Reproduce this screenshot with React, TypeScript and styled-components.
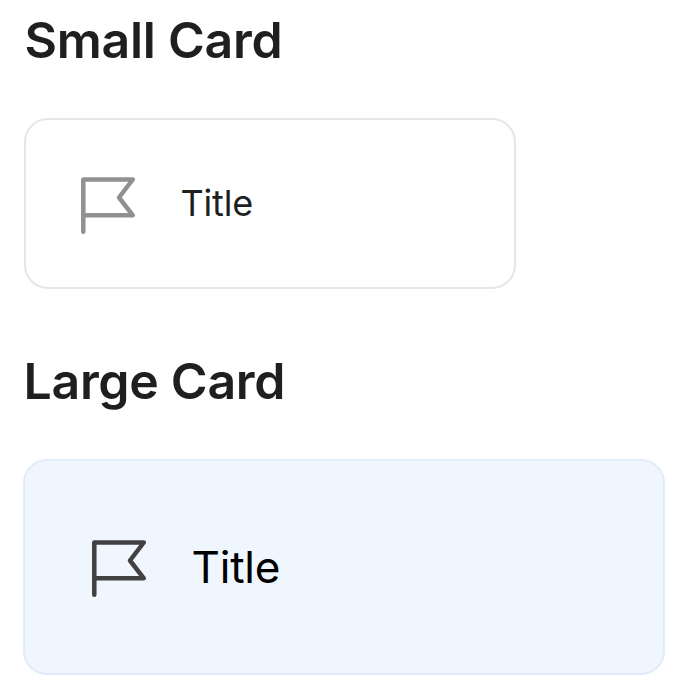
import React from "react";
import styled, { createGlobalStyle } from "styled-components";

const GlobalStyle = createGlobalStyle`
  * { box-sizing: border-box; }
  body { margin: 0; background: #fff; font-family: Inter, "Liberation Sans", sans-serif; }
`;

const Page = styled.main`
  display: flex;
  flex-direction: column;
  align-items: flex-start;
  padding: 10px 0 0 23px;
`;

const Heading = styled.h2<{ $tracking: number; $indent: number }>`
  margin: 0 0 0 ${(p) => p.$indent}px;
  height: 60px;
  line-height: 60px;
  font-size: 50px;
  font-weight: 600;
  letter-spacing: ${(p) => p.$tracking}px;
  color: #1f1f1f;
  white-space: nowrap;
`;

const Card = styled.section<{ $large?: boolean }>`
  display: flex;
  align-items: center;
  gap: 42.5px;
  width: ${(p) => (p.$large ? 642 : 492)}px;
  height: ${(p) => (p.$large ? 216 : 171)}px;
  margin: ${(p) => (p.$large ? "48px 0 0" : "48px 0 62px 1px")};
  padding-left: ${(p) => (p.$large ? 66 : 54)}px;
  border: 2px solid ${(p) => (p.$large ? "#e0ecf9" : "#e6e6e6")};
  border-radius: 24px;
  background: ${(p) => (p.$large ? "#eff6fd" : "#fff")};
`;

const Icon = styled.svg<{ $large?: boolean }>`
  display: block;
  width: 58px;
  height: 60px;
  fill: none;
  stroke: ${(p) => (p.$large ? "#414141" : "#919191")};
  stroke-width: 4.5;
  stroke-linecap: round;
  stroke-linejoin: round;
`;

const Title = styled.span<{ $large?: boolean }>`
  font-size: ${(p) => (p.$large ? 44 : 36)}px;
  line-height: 1.2;
  letter-spacing: -0.2px;
  color: ${(p) => (p.$large ? "#000" : "#1f1f1f")};
`;

const Flag = ({ large }: { large?: boolean }) => (
  <Icon $large={large} viewBox="0 0 58 60" aria-hidden="true">
    <path d="M3.3 57.7V5.5H52.8L39 23.5L52.8 41.3H3.3" />
  </Icon>
);

export default function App() {
  return (
    <>
      <GlobalStyle />
      <Page>
        <Heading $tracking={-0.25} $indent={1.5}>Small Card</Heading>
        <Card>
          <Flag />
          <Title>Title</Title>
        </Card>
        <Heading $tracking={-0.3} $indent={0.5}>Large Card</Heading>
        <Card $large>
          <Flag large />
          <Title $large>Title</Title>
        </Card>
      </Page>
    </>
  );
}
